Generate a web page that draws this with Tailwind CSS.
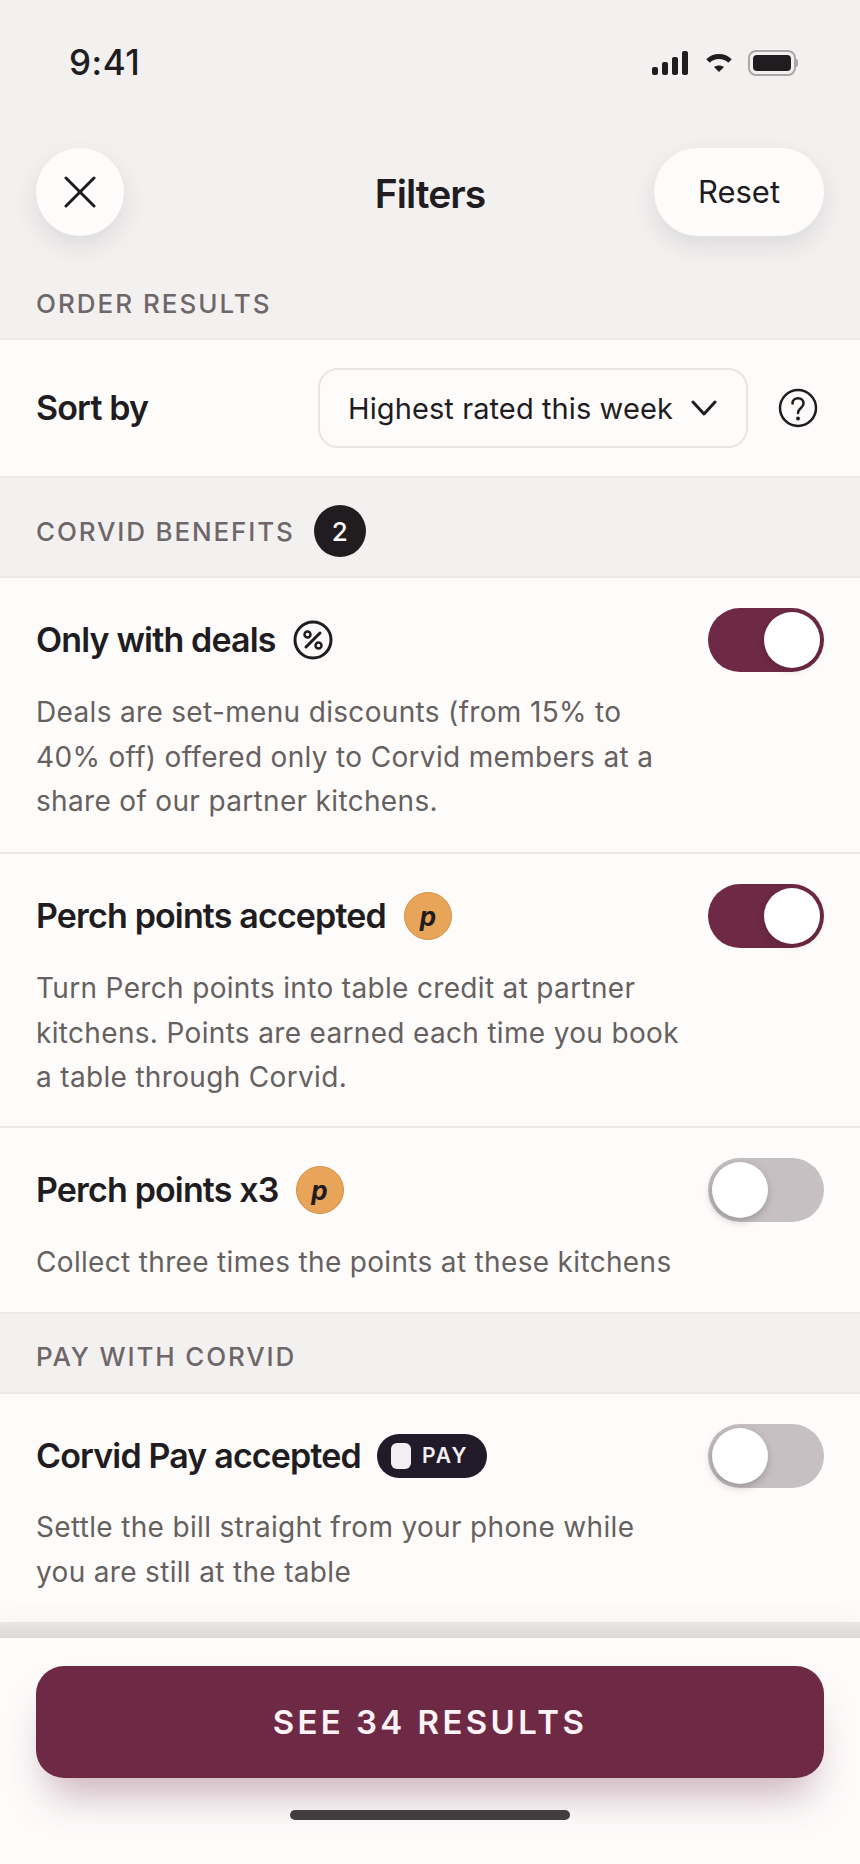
<!doctype html>
<html lang="en">
<head>
<meta charset="utf-8">
<script src="https://cdn.jsdelivr.net/npm/@tailwindcss/browser@4"></script>
<title>Filters</title>
</head>
<body class="m-0 bg-[#fdfcfb]">
<div class="w-[860px] h-[1864px] overflow-hidden flex flex-col bg-[#f2f1f0] font-['Inter',sans-serif] text-[#211c1f]">

  <div class="h-[148px] shrink-0 pl-[69px] pr-[62px] pt-[42px] flex justify-between items-start">
    <span class="text-[35px] leading-[40px] font-medium tracking-[0.5px]">9:41</span>
    <div class="flex items-center pt-[8px]">
      <svg width="36" height="24" viewBox="0 0 36 24" fill="#211c1f"><rect x="0" y="16" width="6" height="8" rx="2"/><rect x="10" y="11" width="6" height="13" rx="2"/><rect x="20" y="6" width="6" height="18" rx="2"/><rect x="30" y="0" width="6" height="24" rx="2"/></svg>
      <svg class="ml-[18px]" width="26" height="20" viewBox="0 0 26 20" fill="none"><path d="M2 8 C8 2 18 2 24 8" stroke="#211c1f" stroke-width="5"/><path d="M8 14 L13 19 L18 14 C15 12 11 12 8 14Z" fill="#211c1f"/></svg>
      <div class="flex items-center ml-[16px]">
        <div class="w-[48px] h-[26px] rounded-[8px] border-[2px] border-[#a9a7a7] p-[3px]"><div class="w-full h-full rounded-[4px] bg-[#211c1f]"></div></div>
        <div class="w-[2px] h-[8px] bg-[#a9a7a7] rounded-r-full"></div>
      </div>
    </div>
  </div>

  <div class="h-[88px] shrink-0 px-[36px] grid grid-cols-[170px_1fr_170px] items-center">
    <button class="w-[88px] h-[88px] rounded-full bg-[#fdfcfb] shadow-[0_10px_24px_rgba(30,20,25,0.10)] flex items-center justify-center">
      <svg width="32" height="32" viewBox="0 0 32 32" fill="none" stroke="#211c1f" stroke-width="3" stroke-linecap="round"><path d="M2 2 L30 30 M30 2 L2 30"/></svg>
    </button>
    <h1 class="text-center pt-[4px] text-[39px] leading-[44px] font-semibold tracking-[-1px]">Filters</h1>
    <button class="w-[170px] h-[88px] rounded-full bg-[#fdfcfb] shadow-[0_10px_24px_rgba(30,20,25,0.10)] text-[31px] leading-[36px] font-normal">Reset</button>
  </div>

  <div class="h-[104px] shrink-0 px-[36px] pt-[53px] border-b-[2px] border-[#ebe9e8]">
    <span class="block text-[26px] leading-[30px] font-medium tracking-[2px] text-[#6e6668]">ORDER RESULTS</span>
  </div>

  <div class="h-[138px] shrink-0 bg-[#fdfcfb] pl-[36px] pr-[42px] flex items-center border-b-[2px] border-[#ebe9e8]">
    <span class="text-[34px] leading-[40px] font-semibold tracking-[-0.85px]">Sort by</span>
    <div class="ml-auto w-[430px] h-[80px] rounded-[20px] border-[2px] border-[#e8e6e5] pl-[28px] pr-[29px] flex items-center justify-between">
      <span class="pt-[2px] text-[29px] leading-[36px] tracking-[0.1px] whitespace-nowrap">Highest rated this week</span>
      <svg width="26" height="16" viewBox="0 0 26 16" fill="none" stroke="#211c1f" stroke-width="3" stroke-linecap="round" stroke-linejoin="round"><path d="M2 2 L13 14 L24 2"/></svg>
    </div>
    <svg class="ml-[30px]" width="40" height="40" viewBox="0 0 40 40" fill="none" stroke="#211c1f" stroke-width="2.5"><circle cx="20" cy="20" r="18"/><path d="M14.5 15.5 C14.5 8.5 25.5 8.5 25.5 15.5 C25.5 20 20 20 20 25" stroke-linecap="round"/><circle cx="20" cy="30.5" r="2" fill="#211c1f" stroke="none"/></svg>
  </div>

  <div class="h-[100px] shrink-0 px-[36px] pt-[8px] flex items-center gap-[19px] border-b-[2px] border-[#ebe9e8]">
    <span class="pt-[2px] text-[26px] leading-[30px] font-medium tracking-[1.85px] text-[#6e6668]">CORVID BENEFITS</span>
    <span class="w-[52px] h-[52px] rounded-full bg-[#211c1f] text-[#fdfcfb] text-[26px] font-medium flex items-center justify-center">2</span>
  </div>

  <section class="h-[276px] shrink-0 bg-[#fdfcfb] px-[36px] pt-[30px] border-b-[2px] border-[#ebe9e8]">
    <div class="flex items-center justify-between h-[64px]">
      <div class="flex items-center gap-[17px]">
        <span class="text-[34px] leading-[40px] font-semibold tracking-[-0.85px]">Only with deals</span>
        <svg width="40" height="40" viewBox="0 0 40 40" fill="none" stroke="#211c1f"><circle cx="20" cy="20" r="18" stroke-width="3"/><path d="M27 13 L13 27" stroke-width="3" stroke-linecap="round"/><circle cx="14.5" cy="14.5" r="3" stroke-width="2.5"/><circle cx="25.5" cy="25.5" r="3" stroke-width="2.5"/></svg>
      </div>
      <div class="w-[116px] h-[64px] rounded-full bg-[#6e2944] p-[4px] flex justify-end"><div class="w-[56px] h-[56px] rounded-full bg-white shadow-[0_3px_8px_rgba(0,0,0,0.12)]"></div></div>
    </div>
    <p class="mt-[18px] w-[645px] text-[28px] leading-[44.5px] tracking-[0.33px] text-[#66605f]">Deals are set-menu discounts (from 15% to 40% off) offered only to Corvid members at a share of our partner kitchens.</p>
  </section>

  <section class="h-[274px] shrink-0 bg-[#fdfcfb] px-[36px] pt-[30px] border-b-[2px] border-[#ebe9e8]">
    <div class="flex items-center justify-between h-[64px]">
      <div class="flex items-center gap-[18px]">
        <span class="text-[34px] leading-[40px] font-semibold tracking-[-0.85px]">Perch points accepted</span>
        <span class="w-[48px] h-[48px] rounded-full bg-[#e8a458] border-[1.5px] border-[#d19349] text-[26px] font-bold italic flex items-center justify-center">p</span>
      </div>
      <div class="w-[116px] h-[64px] rounded-full bg-[#6e2944] p-[4px] flex justify-end"><div class="w-[56px] h-[56px] rounded-full bg-white shadow-[0_3px_8px_rgba(0,0,0,0.12)]"></div></div>
    </div>
    <p class="mt-[18px] w-[645px] text-[28px] leading-[44.5px] tracking-[0.33px] text-[#66605f]">Turn Perch points into table credit at partner kitchens. Points are earned each time you book a table through Corvid.</p>
  </section>

  <section class="h-[186px] shrink-0 bg-[#fdfcfb] px-[36px] pt-[30px] border-b-[2px] border-[#ebe9e8]">
    <div class="flex items-center justify-between h-[64px]">
      <div class="flex items-center gap-[17px]">
        <span class="text-[34px] leading-[40px] font-semibold tracking-[-0.85px]">Perch points x3</span>
        <span class="w-[48px] h-[48px] rounded-full bg-[#e8a458] border-[1.5px] border-[#d19349] text-[26px] font-bold italic flex items-center justify-center">p</span>
      </div>
      <div class="w-[116px] h-[64px] rounded-full bg-[#c6c0c2] p-[4px] flex justify-start"><div class="w-[56px] h-[56px] rounded-full bg-white shadow-[-1px_3px_8px_rgba(0,0,0,0.25)]"></div></div>
    </div>
    <p class="mt-[18px] w-[645px] text-[28px] leading-[44.5px] tracking-[0.33px] text-[#66605f]">Collect three times the points at these kitchens</p>
  </section>

  <div class="h-[80px] shrink-0 px-[36px] pt-[5px] flex items-center border-b-[2px] border-[#ebe9e8]">
    <span class="pt-[2px] text-[26px] leading-[30px] font-medium tracking-[1.85px] text-[#6e6668]">PAY WITH CORVID</span>
  </div>

  <section class="h-[228px] shrink-0 bg-[#fdfcfb] px-[36px] pt-[30px]">
    <div class="flex items-center justify-between h-[64px]">
      <div class="flex items-center gap-[16px]">
        <span class="text-[34px] leading-[40px] font-semibold tracking-[-0.85px]">Corvid Pay accepted</span>
        <span class="w-[110px] h-[44px] rounded-full bg-[#211a28] pl-[14px] flex items-center gap-[11px]">
          <span class="w-[20px] h-[26px] rounded-[6px] bg-[#f2eff3]"></span>
          <span class="text-[21px] leading-[24px] font-semibold tracking-[2px] text-[#f2eff3]">PAY</span>
        </span>
      </div>
      <div class="w-[116px] h-[64px] rounded-full bg-[#c6c0c2] p-[4px] flex justify-start"><div class="w-[56px] h-[56px] rounded-full bg-white shadow-[-1px_3px_8px_rgba(0,0,0,0.25)]"></div></div>
    </div>
    <p class="mt-[17px] w-[645px] text-[28px] leading-[44.5px] tracking-[0.33px] text-[#66605f]">Settle the bill straight from your phone while you are still at the table</p>
  </section>

  <div class="h-[16px] shrink-0 bg-linear-to-b from-[#e9e7e6] to-[#dcdad8] shadow-[0_-10px_20px_rgba(0,0,0,0.03)]"></div>

  <div class="flex-1 bg-[#fdfcfb] px-[36px] pt-[28px] flex flex-col items-center">
    <button class="w-full h-[112px] pt-[2px] rounded-[28px] bg-[#6e2944] text-[#fdf3f7] text-[33px] font-semibold tracking-[3.4px] shadow-[0_28px_40px_-12px_rgba(110,41,68,0.35)]">SEE 34 RESULTS</button>
    <div class="mt-[32px] w-[280px] h-[10px] rounded-full bg-[#433d40]"></div>
  </div>
</div>
</body>
</html>
